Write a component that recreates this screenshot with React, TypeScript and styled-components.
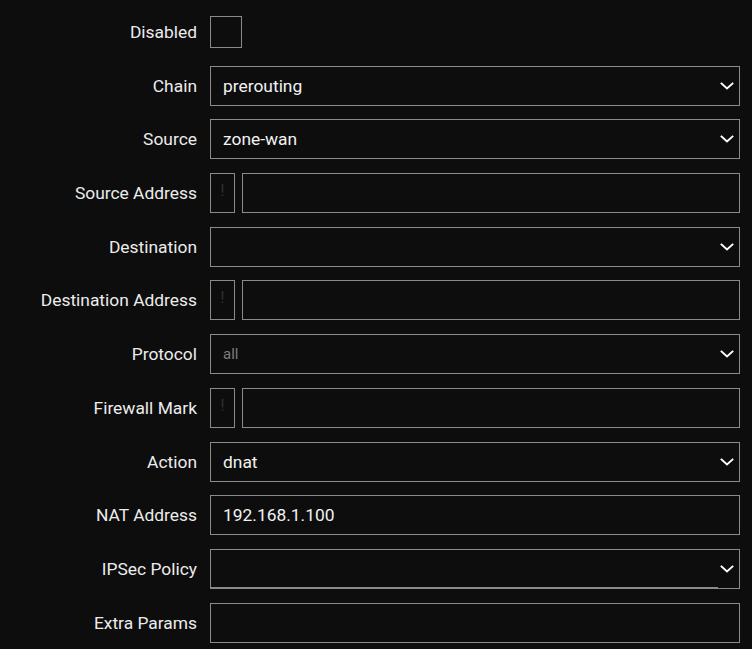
import React from 'react';
import styled, { createGlobalStyle } from 'styled-components';

const GlobalStyle = createGlobalStyle`
  html, body {
    margin: 0;
    padding: 0;
    background: #0d0d0d;
    font-family: Roboto, "Liberation Sans", sans-serif;
  }
`;

const Form = styled.div`
  display: flex;
  flex-direction: column;
  gap: 13.7px;
  padding: 12px 12px 0 0;
  width: 752px;
  box-sizing: border-box;
`;

const Row = styled.div`
  display: grid;
  grid-template-columns: 197px 1fr;
  column-gap: 13px;
  align-items: center;
  min-height: 40px;
`;

const Label = styled.div`
  text-align: right;
  color: #ececec;
  font-size: 17.4px;
  line-height: 40px;
  white-space: nowrap;
`;

const Box = styled.div<{ $muted?: boolean }>`
  position: relative;
  height: 40px;
  box-sizing: border-box;
  border: 1px solid #8a8a8a;
  background: #0d0d0d;
  display: flex;
  align-items: center;
  padding: 0 12px;
  color: ${({ $muted }) => ($muted ? '#7d7d7d' : '#f2f2f2')};
  font-size: ${({ $muted }) => ($muted ? '15px' : '17.4px')};
`;

const SelectBox = styled(Box)<{ $underline?: boolean }>`
  justify-content: space-between;
  padding-right: 4px;
  &::after {
    content: '';
    display: ${({ $underline }) => ($underline ? 'block' : 'none')};
    position: absolute;
    left: -1px;
    right: 21px;
    bottom: -1px;
    height: 2px;
    background: #8a8a8a;
  }
`;

const Checkbox = styled.div`
  width: 32px;
  height: 32px;
  box-sizing: border-box;
  border: 1px solid #8a8a8a;
`;

const Pair = styled.div`
  display: grid;
  grid-template-columns: 25px 1fr;
  column-gap: 7px;
`;

const Invert = styled.div`
  height: 40px;
  box-sizing: border-box;
  border: 1px solid #8a8a8a;
  display: flex;
  justify-content: center;
  padding-top: 8px;
  color: #2e2e2e;
  font-size: 17px;
  line-height: 1;
`;

const Chevron = () => (
  <svg width="16" height="16" viewBox="0 0 16 16" fill="none">
    <path d="M2.5 5.5L8 10.5L13.5 5.5" stroke="#ffffff" strokeWidth="1.9" strokeLinecap="square" strokeLinejoin="miter" />
  </svg>
);

const Select: React.FC<{ value?: string; muted?: boolean; underline?: boolean }> = ({ value, muted, underline }) => (
  <SelectBox $muted={muted} $underline={underline}>
    <span>{value}</span>
    <Chevron />
  </SelectBox>
);

const AddressField = () => (
  <Pair>
    <Invert>!</Invert>
    <Box />
  </Pair>
);

export default function App() {
  return (
    <>
      <GlobalStyle />
      <Form>
        <Row>
          <Label>Disabled</Label>
          <Checkbox />
        </Row>
        <Row>
          <Label>Chain</Label>
          <Select value="prerouting" />
        </Row>
        <Row>
          <Label>Source</Label>
          <Select value="zone-wan" />
        </Row>
        <Row>
          <Label>Source Address</Label>
          <AddressField />
        </Row>
        <Row>
          <Label>Destination</Label>
          <Select />
        </Row>
        <Row>
          <Label>Destination Address</Label>
          <AddressField />
        </Row>
        <Row>
          <Label>Protocol</Label>
          <Select value="all" muted />
        </Row>
        <Row>
          <Label>Firewall Mark</Label>
          <AddressField />
        </Row>
        <Row>
          <Label>Action</Label>
          <Select value="dnat" />
        </Row>
        <Row>
          <Label>NAT Address</Label>
          <Box>192.168.1.100</Box>
        </Row>
        <Row>
          <Label>IPSec Policy</Label>
          <Select underline />
        </Row>
        <Row>
          <Label>Extra Params</Label>
          <Box />
        </Row>
      </Form>
    </>
  );
}
